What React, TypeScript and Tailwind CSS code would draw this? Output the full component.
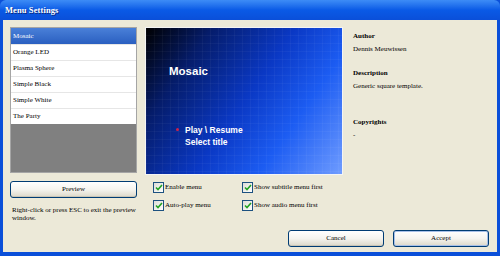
import React from "react"

const themes = ["Mosaic", "Orange LED", "Plasma Sphere", "Simple Black", "Simple White", "The Party"]

function CheckBox({ label }: { label: string }) {
  return (
    <div className="flex items-center gap-[1px] h-[11px]">
      <div className="w-[11px] h-[11px] border border-[#1c5180] bg-gradient-to-br from-[#dcdcd7] to-white flex items-center justify-center">
        <svg width="8" height="7" viewBox="0 0 8 7">
          <path d="M1 3.5 L3 5.5 L7 1" stroke="#21a121" strokeWidth="1.6" fill="none" />
        </svg>
      </div>
      <span>{label}</span>
    </div>
  )
}

function XpButton({ label, className }: { label: string; className?: string }) {
  return (
    <div
      className={
        "h-[17px] rounded-[3px] border border-[#003c74] bg-gradient-to-b from-white via-[#f5f4ef] to-[#dcd8c9] flex items-center justify-center shadow-[inset_0_-1px_0_#c9c5b6] " +
        (className ?? "")
      }
    >
      {label}
    </div>
  )
}

export default function App() {
  return (
    <div className="w-[500px] h-[256px] bg-[#0a4fd9] flex flex-col font-['Liberation_Serif',serif] text-[7px] leading-none text-black overflow-hidden">
      {/* title bar */}
      <div className="h-[20px] shrink-0 bg-gradient-to-b from-[#3d8cf6] via-[#0a5ae6] to-[#0a4fd9] flex items-center px-[5px] rounded-t-[6px]">
        <span className="text-white font-bold text-[8.5px] tracking-[0.1px] [text-shadow:1px_1px_0_#0a2a80]">Menu Settings</span>
      </div>

      <div className="flex-1 mx-[3px] mb-[4px] bg-[#ece9d8] flex flex-col px-[7px] pt-[7px]">
        {/* top row */}
        <div className="flex h-[148px]">
          <div className="w-[127px] h-[146px] bg-[#808080] border border-[#a5a5a5] flex flex-col">
            {themes.map((t, i) => (
              <div
                key={t}
                className={
                  i === 0
                    ? "h-[16px] bg-gradient-to-b from-[#4a80d8] to-[#2a5fc0] text-white flex items-center px-[2px]"
                    : "h-[16px] bg-white border-t border-[#e6e6e6] flex items-center px-[2px]"
                }
              >
                {t}
              </div>
            ))}
          </div>

          <div className="ml-[8px] w-[198px] h-[148px] border border-[#f4f4f4] p-0">
            <div className="relative w-full h-full bg-[linear-gradient(125deg,#000_0%,#051c6a_22%,#0a38c4_50%,#1c5cf2_72%,#6f9cff_100%)] overflow-hidden">
              <div className="absolute inset-0 bg-[linear-gradient(90deg,rgba(255,255,255,0.035)_1px,transparent_1px),linear-gradient(0deg,rgba(255,255,255,0.035)_1px,transparent_1px)] bg-[length:8px_8px]" />
              <div className="relative flex flex-col h-full pl-[23px] pt-[38px] font-['Liberation_Sans',sans-serif] font-bold text-white">
                <span className="text-[11.5px]">Mosaic</span>
                <div className="mt-[48px] flex items-center">
                  <span className="w-[3px] h-[3px] rounded-full bg-[#d0204a] ml-[7px] mr-[6px]" />
                  <span className="text-[8.5px]">Play \ Resume</span>
                </div>
                <span className="text-[8.5px] mt-[4px] ml-[16px]">Select title</span>
              </div>
            </div>
          </div>

          <div className="ml-[10px] pt-[6px] flex flex-col">
            <span className="font-bold">Author</span>
            <span className="mt-[6px]">Dennis Meuwissen</span>
            <span className="font-bold mt-[17px]">Description</span>
            <span className="mt-[6px]">Generic square template.</span>
            <span className="font-bold mt-[29px]">Copyrights</span>
            <span className="mt-[6px]">-</span>
          </div>
        </div>

        {/* middle row */}
        <div className="flex mt-[6px]">
          <div className="w-[127px] flex flex-col">
            <XpButton label="Preview" />
            <p className="mt-[8px] ml-[2px] leading-[8px]">
              Right-click or press ESC to exit the preview
              <br />
              window.
            </p>
          </div>
          <div className="ml-[16px] w-[89px] flex flex-col gap-[7px] pt-[1px]">
            <CheckBox label="Enable menu" />
            <CheckBox label="Auto-play menu" />
          </div>
          <div className="flex flex-col gap-[7px] pt-[1px]">
            <CheckBox label="Show subtitle menu first" />
            <CheckBox label="Show audio menu first" />
          </div>
        </div>

        {/* bottom buttons */}
        <div className="flex justify-end gap-[9px] mt-auto mb-[5px] pr-[1px]">
          <XpButton label="Cancel" className="w-[96px]" />
          <XpButton label="Accept" className="w-[96px] border-[#003c74] shadow-[inset_0_0_0_1px_#a8c0e8]" />
        </div>
      </div>
    </div>
  )
}
